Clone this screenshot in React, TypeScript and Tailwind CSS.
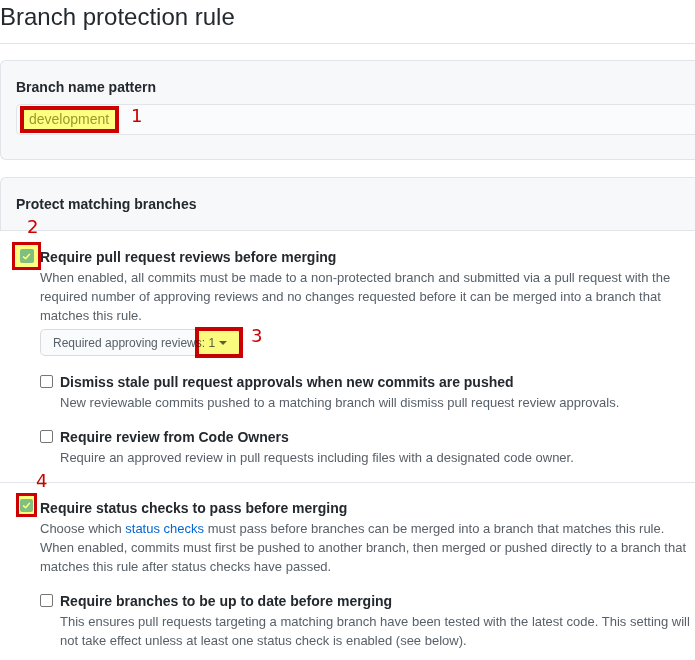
import React from 'react';

const Num: React.FC<{ n: string; className: string }> = ({ n, className }) => (
    <span className={`absolute text-[18px] leading-none text-[#cc0000] font-['DejaVu_Sans',sans-serif] ${className}`}>{n}</span>
);

// annotated (highlighted) checked checkbox
const MarkedCheck: React.FC<{ className: string; box: string }> = ({ className, box }) => (
    <div className={`absolute border-[3px] border-[#cc0000] bg-[#ffff80] flex items-center justify-center ${className}`}>
        <div className={`${box} rounded-[2px] bg-[#7fbf7f] flex items-center justify-center`}>
            <svg viewBox="0 0 12 12" className="w-[9px] h-[9px]">
                <path d="M2 6.5 L4.8 9 L10 3" fill="none" stroke="#ffff80" strokeWidth="2" strokeLinecap="round" strokeLinejoin="round" />
            </svg>
        </div>
    </div>
);

const EmptyCheck = () => (
    <span className="absolute left-[40px] top-[3px] w-[13px] h-[13px] rounded-[2px] border border-[#767676] bg-white" />
);

export default function App() {
    return (
        <div className="w-[695px] h-[660px] overflow-hidden bg-white text-[#24292e] font-['Liberation_Sans',Arial,sans-serif]">
            <div className="w-[716px]">
                <div className="pt-[2px] pb-[11px] border-b border-[#e1e4e8]">
                    <h2 className="text-[24px] leading-[30px] font-normal">Branch protection rule</h2>
                </div>

                {/* Branch name pattern */}
                <div className="relative mt-[16px] border-y border-l border-[#e1e4e8] rounded-l-md bg-[#f6f8fa] pt-[16px] pl-[15px] pb-[24px]">
                    <div className="text-[14px] leading-[20px] font-bold">Branch name pattern</div>
                    <div className="mt-[7px] h-[31px] border-y border-l border-[#e1e4e8] rounded-l-[5px] bg-[#fafbfc] flex items-center">
                        <div className="relative ml-[3px] h-[27px] w-[99px] border-[4px] border-[#cc0000] bg-[#ffff80] flex items-center">
                            <span className="ml-[5px] text-[14px] text-[#999933]">development</span>
                        </div>
                    </div>
                    <Num n="1" className="left-[130px] top-[46px]" />
                </div>

                {/* Protect matching branches */}
                <div className="relative mt-[17px]">
                    <div className="border-y border-l border-[#e1e4e8] rounded-tl-md bg-[#f6f8fa] py-[16px] pl-[15px] text-[14px] leading-[20px] font-bold">
                        Protect matching branches
                    </div>
                    <Num n="2" className="left-[27px] top-[41px]" />

                    <div className="relative pt-[16px] pb-[15px] pl-[40px] pr-[16px] border-b border-[#e1e4e8]">
                        <MarkedCheck className="left-[12px] top-[11px] w-[29px] h-[28px]" box="w-[14px] h-[14px]" />
                        <div className="text-[14px] leading-[20px] font-bold">Require pull request reviews before merging</div>
                        <p className="mt-[1px] text-[13px] leading-[19px] text-[#586069]">
                            When enabled, all commits must be made to a non-protected branch and submitted via a pull request with the required number of approving reviews and no changes requested before it can be merged into a branch that matches this rule.
                        </p>
                        <div className="relative mt-[4px] inline-flex items-center h-[27px] px-[12px] border border-[#d8dce0] rounded-[5px] bg-[#fafbfc] text-[12px] text-[#586069]">
                            Required approving reviews: 1
                            <span className="ml-[4px] mt-[1px] w-0 h-0 border-x-[4px] border-t-[4px] border-x-transparent border-t-[#586069]" />
                            <div className="absolute left-[154px] top-[-3px] w-[48px] h-[31px] border-[4px] border-[#cc0000] bg-[#ffff80] mix-blend-multiply" />
                        </div>
                        <Num n="3" className="left-[251px] top-[96px]" />

                        <div className="relative mt-[16px] -ml-[40px] pl-[60px]">
                            <EmptyCheck />
                            <div className="text-[14px] leading-[20px] font-bold">Dismiss stale pull request approvals when new commits are pushed</div>
                            <p className="mt-[1px] text-[13px] leading-[19px] text-[#586069]">New reviewable commits pushed to a matching branch will dismiss pull request review approvals.</p>
                        </div>

                        <div className="relative mt-[15px] -ml-[40px] pl-[60px]">
                            <EmptyCheck />
                            <div className="text-[14px] leading-[20px] font-bold">Require review from Code Owners</div>
                            <p className="mt-[1px] text-[13px] leading-[19px] text-[#586069]">Require an approved review in pull requests including files with a designated code owner.</p>
                        </div>
                    </div>

                    <div className="relative pt-[15px] pl-[40px] pr-[16px]">
                        <Num n="4" className="left-[36px] top-[-11px]" />
                        <MarkedCheck className="left-[16px] top-[10px] w-[21px] h-[24px]" box="w-[13px] h-[13px]" />
                        <div className="text-[14px] leading-[20px] font-bold">Require status checks to pass before merging</div>
                        <p className="mt-[1px] text-[13px] leading-[19px] text-[#586069]">
                            Choose which <span className="text-[#0366d6]">status checks</span> must pass before branches can be merged into a branch that matches this rule.
                            <br />
                            When enabled, commits must first be pushed to another branch, then merged or pushed directly to a branch that matches this rule after status checks have passed.
                        </p>

                        <div className="relative mt-[15px] -ml-[40px] pl-[60px]">
                            <EmptyCheck />
                            <div className="text-[14px] leading-[20px] font-bold">Require branches to be up to date before merging</div>
                            <p className="mt-[1px] text-[13px] leading-[19px] text-[#586069]">
                                This ensures pull requests targeting a matching branch have been tested with the latest code. This setting will not take effect unless at least one status check is enabled (see below).
                            </p>
                        </div>
                    </div>
                </div>
            </div>
        </div>
    );
}
